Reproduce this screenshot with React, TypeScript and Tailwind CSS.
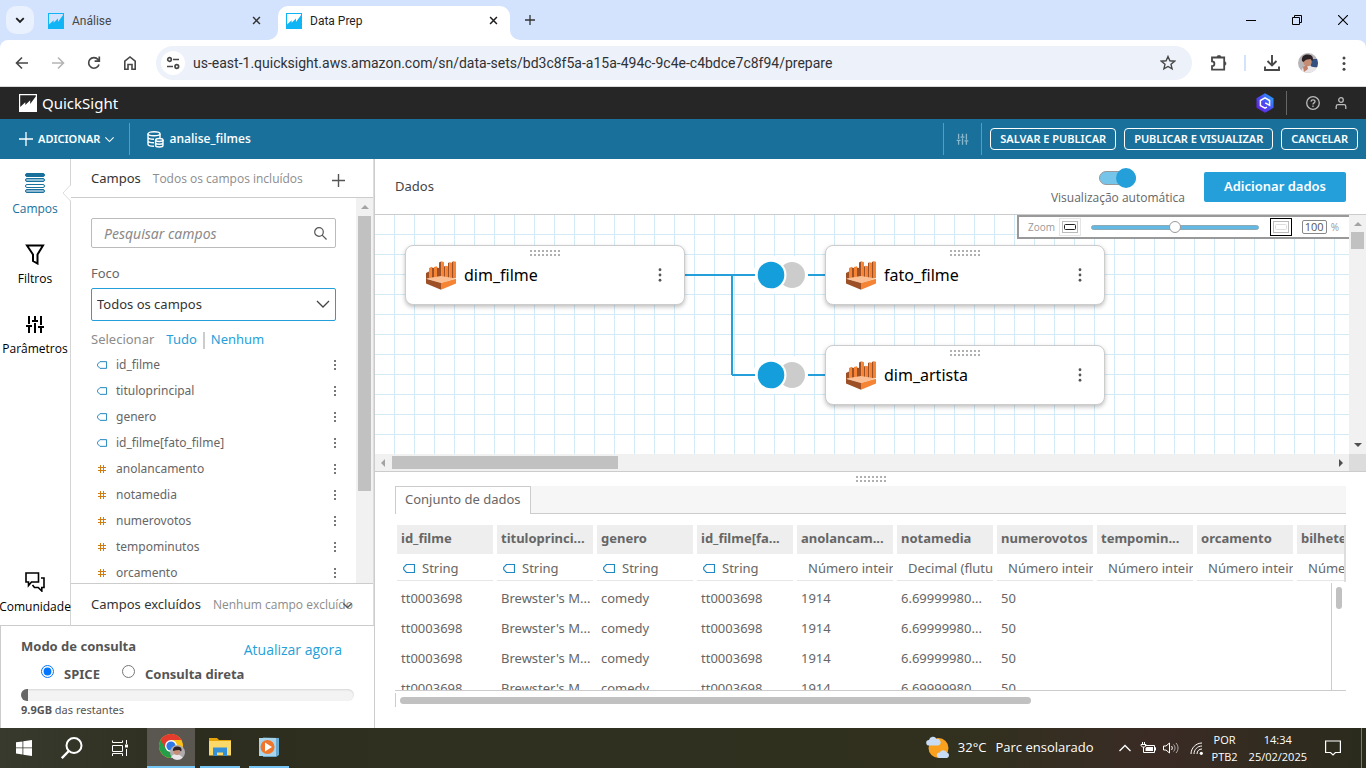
import React from 'react';

const SANS = "font-['Open_Sans','Noto_Sans',sans-serif]";
const NOTO = "font-['Noto_Sans','Open_Sans',sans-serif]";

/* ---------- Icons ---------- */

function QuickSightMark({ className, hole }: { className: string; hole: string }) {
  return (
    <svg viewBox="0 0 18 18" className={className} aria-hidden="true">
      <rect width="18" height="18" fill="currentColor" />
      <path d="M1.200 1.200h15.600v1.300L11.200 10V6.300L6.300 11V8.200L1.200 13z" fill={hole} />
    </svg>
  );
}

function ChevronDown({ className, width = 1.5 }: { className: string; width?: number }) {
  return (
    <svg viewBox="0 0 16 16" className={className} fill="none" stroke="currentColor" strokeWidth={width} aria-hidden="true">
      <path d="M2 5l6 6 6-6" />
    </svg>
  );
}

function CloseIcon({ className }: { className: string }) {
  return (
    <svg viewBox="0 0 10 10" className={className} stroke="currentColor" strokeWidth="1.7" aria-hidden="true">
      <path d="M1.2 1.2l7.6 7.6M8.8 1.2L1.2 8.8" />
    </svg>
  );
}

function PlusIcon({ className, width = 1.5 }: { className: string; width?: number }) {
  return (
    <svg viewBox="0 0 14 14" className={className} stroke="currentColor" strokeWidth={width} aria-hidden="true">
      <path d="M7 0v14M0 7h14" />
    </svg>
  );
}

function SlidersIcon({ className }: { className: string }) {
  return (
    <svg viewBox="0 0 20 18" className={className} stroke="currentColor" strokeWidth="2" fill="none" aria-hidden="true">
      <path d="M4 1v8M4 12v6M1 11h6M10 1v4M10 8v10M7 6h6M16 1v9M16 13v5M13 12h6" />
    </svg>
  );
}

function VerticalDots({ className }: { className: string }) {
  return (
    <svg viewBox="0 0 4 16" className={className} fill="currentColor" aria-hidden="true">
      <circle cx="2" cy="2" r="1.6" />
      <circle cx="2" cy="8" r="1.6" />
      <circle cx="2" cy="14" r="1.6" />
    </svg>
  );
}

function RowDots() {
  return (
    <svg viewBox="0 0 2 10" className="h-[10px] w-[2px] text-[#777]" fill="currentColor" aria-hidden="true">
      <path d="M0 0h2v2H0zM0 4h2v2H0zM0 8h2v2H0z" />
    </svg>
  );
}

function Grip() {
  const columns = Array.from({ length: 8 }, (_, i) => i * 4);
  return (
    <svg viewBox="0 0 30 6" className="h-[6px] w-[30px]" fill="#b0b0b0" aria-hidden="true">
      {columns.map((x) => (
        <path key={x} d={`M${x} 0h2v2h-2zM${x} 4h2v2h-2z`} />
      ))}
    </svg>
  );
}

function StringIcon({ className }: { className: string }) {
  return (
    <svg viewBox="0 0 12 9" className={className} fill="none" stroke="#2088c0" strokeWidth="1.2" aria-hidden="true">
      <path d="M3.5.5h8v8h-8L.7 5.6V3.4z" />
    </svg>
  );
}

function HashIcon() {
  return (
    <svg viewBox="0 0 8 8" className="h-[8px] w-[8px]" stroke="#d07c10" strokeWidth="1" aria-hidden="true">
      <path d="M2.5 0v8M5.5 0v8M0 2.5h8M0 5.5h8" />
    </svg>
  );
}

function AthenaIcon() {
  return (
    <svg viewBox="0 0 30 29" className="h-[29px] w-[30px]" aria-hidden="true">
      <path d="M0 12l3-1.500V18H0z" fill="#9d5025" />
      <path d="M3 7l3-1.300V18H3z" fill="#f58534" />
      <path d="M6 6.500l2 .5v11H6z" fill="#9d5025" />
      <path d="M8 6l3-.8V18H8z" fill="#f58534" />
      <path d="M11 6.500l2 .5v11h-2z" fill="#9d5025" />
      <path d="M13 1.500l2.500-1.200V18H13z" fill="#9d5025" />
      <path d="M15.500 .3l2.500.9V18h-2.500z" fill="#f58534" />
      <path d="M18 5.500l1.500-.8V18H18z" fill="#9d5025" />
      <path d="M19.500 4.700l2.500.6V18h-2.500z" fill="#f58534" />
      <path d="M22 2l1.500-.7V17H22z" fill="#9d5025" />
      <path d="M23.500 1.300l2.500.5V17h-2.500zM27.500 .2l2.500.5V17h-2.500z" fill="#f58534" />
      <path d="M26 1l1.500-.8V17H26z" fill="#9d5025" />
      <path d="M0 17.600L15 15l15 2.600-15 4.500z" fill="#fbbf93" />
      <path d="M0 17.800l15 4.300v6.700L0 22.500z" fill="#9d5025" />
      <path d="M30 17.800l-15 4.300v6.700l15-6.300z" fill="#f58534" />
    </svg>
  );
}

function Avatar({ className }: { className: string }) {
  return (
    <svg viewBox="0 0 20 20" className={className} aria-hidden="true">
      <clipPath id="avatarClip">
        <circle cx="10" cy="10" r="10" />
      </clipPath>
      <g clipPath="url(#avatarClip)">
        <rect width="20" height="20" fill="#b9b4b6" />
        <path d="M12 6h8v8h-7z" fill="#34507f" />
        <path d="M3 20c0-5 4-8 9-7l6 2v6z" fill="#e9e6ea" />
        <circle cx="9.500" cy="9" r="4.200" fill="#c58d74" />
        <path d="M4 8c-1-5 3-7 6-6.500 4 0 6 3 4.500 6.500L12.500 6 8 6.800 5.500 9z" fill="#2b2226" />
        <path d="M5 14l4-2 1 4-4 3z" fill="#c07f66" />
      </g>
    </svg>
  );
}

/* ---------- Browser chrome ---------- */

function BrowserTabs() {
  return (
    <div className="flex h-10 shrink-0 items-end bg-[#d3e2fd] pl-[6px]">
      <button aria-label="Pesquisar guias" className="mb-[6px] flex h-7 w-7 items-center justify-center rounded-[10px] bg-[#e9f0fe] text-[#1f1f1f]">
        <ChevronDown className="h-[10px] w-[10px]" width={3} />
      </button>
      <div className="flex h-[34px] w-[244px] items-center pr-[17px] pb-[5px] pl-[14px]">
        <QuickSightMark className="h-4 w-4 text-[#0fb5f5]" hole="#d3e2fd" />
        <span className="ml-2 flex-1 font-[Roboto,sans-serif] text-[12px] text-[#474747]">Análise</span>
        <button aria-label="Fechar guia" className="text-[#333]">
          <CloseIcon className="h-[9px] w-[9px]" />
        </button>
      </div>
      <div className="relative flex h-[34px] w-[232px] items-center rounded-t-[10px] bg-white pr-[12px] pb-[5px] pl-[8px]">
        <svg viewBox="0 0 10 10" className="absolute bottom-0 -left-[10px] h-[10px] w-[10px]" aria-hidden="true">
          <path d="M10 0v10H0A10 10 0 0 0 10 0z" fill="#fff" />
        </svg>
        <svg viewBox="0 0 10 10" className="absolute -right-[10px] bottom-0 h-[10px] w-[10px]" aria-hidden="true">
          <path d="M0 0v10h10A10 10 0 0 1 0 0z" fill="#fff" />
        </svg>
        <QuickSightMark className="h-4 w-4 text-[#0fb5f5]" hole="#fff" />
        <span className="ml-2 flex-1 font-[Roboto,sans-serif] text-[12px] text-[#1f1f1f]">Data Prep</span>
        <button aria-label="Fechar guia" className="text-[#1f1f1f]">
          <CloseIcon className="h-[9px] w-[9px]" />
        </button>
      </div>
      <button aria-label="Nova guia" className="mb-[6px] ml-[10px] flex h-7 w-5 items-center justify-center text-[#333]">
        <PlusIcon className="h-[10px] w-[10px]" width={1.800} />
      </button>
      <div className="ml-auto flex h-full items-center text-black">
        <button aria-label="Minimizar" className="flex h-full w-[46px] items-center justify-center">
          <svg viewBox="0 0 10 10" className="h-[10px] w-[10px]" stroke="currentColor" aria-hidden="true">
            <path d="M0 5.500h10" />
          </svg>
        </button>
        <button aria-label="Restaurar" className="flex h-full w-[46px] items-center justify-center">
          <svg viewBox="0 0 10 10" className="h-[10px] w-[10px]" fill="none" stroke="currentColor" aria-hidden="true">
            <path d="M.5 2.500h7v7h-7zM2.500 2.500v-2h7v7h-2" />
          </svg>
        </button>
        <button aria-label="Fechar" className="flex h-full w-[46px] items-center justify-center">
          <svg viewBox="0 0 10 10" className="h-[10px] w-[10px]" stroke="currentColor" strokeWidth="1.100" aria-hidden="true">
            <path d="M0 0l10 10M10 0L0 10" />
          </svg>
        </button>
      </div>
    </div>
  );
}

function BrowserToolbar() {
  return (
    <div className="shrink-0 bg-[#d3e2fd]">
      <div className="flex h-[47px] items-center rounded-t-[8px] border-b border-[#d9dadc] bg-white pr-[10px] pl-[14px] text-[#474747]">
        <button aria-label="Voltar" className="flex w-4 justify-center">
          <svg viewBox="0 0 16 16" className="h-4 w-4" fill="none" stroke="currentColor" strokeWidth="1.600" aria-hidden="true">
            <path d="M14 8H3M8 2.500L2.500 8 8 13.500" />
          </svg>
        </button>
        <button aria-label="Avançar" className="ml-5 flex w-4 justify-center text-[#b5b5b5]">
          <svg viewBox="0 0 16 16" className="h-4 w-4" fill="none" stroke="currentColor" strokeWidth="1.600" aria-hidden="true">
            <path d="M2 8h11M8 2.500L13.500 8 8 13.500" />
          </svg>
        </button>
        <button aria-label="Recarregar" className="ml-5 flex w-4 justify-center">
          <svg viewBox="0 0 16 16" className="h-4 w-4" fill="none" stroke="currentColor" strokeWidth="1.700" aria-hidden="true">
            <path d="M13 9.500A5.300 5.300 0 1 1 12 4.500l1 1.200M13.300 1.500v4.700H8.600" />
          </svg>
        </button>
        <button aria-label="Página inicial" className="ml-5 flex w-4 justify-center">
          <svg viewBox="0 0 16 16" className="h-4 w-4" fill="none" stroke="currentColor" strokeWidth="1.600" aria-hidden="true">
            <path d="M2.800 6.200L8 2l5.200 4.200v8H10V9.500H6v4.700H2.800z" />
          </svg>
        </button>
        <div className="ml-[18px] flex h-[34px] flex-1 items-center rounded-full bg-[#edf1fa] pr-4 pl-[5px]">
          <button aria-label="Informações do site" className="flex h-6 w-6 shrink-0 items-center justify-center rounded-full bg-white">
            <svg viewBox="0 0 14 14" className="h-[14px] w-[14px]" fill="none" stroke="currentColor" strokeWidth="1.700" aria-hidden="true">
              <circle cx="3.500" cy="3.500" r="1.800" />
              <path d="M7 3.500h6M1 10.500h6" />
              <circle cx="10.800" cy="10.500" r="1.800" />
            </svg>
          </button>
          <input
            aria-label="Endereço"
            readOnly
            value="us-east-1.quicksight.aws.amazon.com/sn/data-sets/bd3c8f5a-a15a-494c-9c4e-c4bdce7c8f94/prepare"
            className="ml-2 min-w-0 flex-1 bg-transparent font-[Roboto,sans-serif] text-[14px] text-[#2f3135] outline-none"
          />
          <svg viewBox="0 0 16 16" className="h-4 w-4 shrink-0" fill="none" stroke="currentColor" strokeWidth="1.400" aria-hidden="true">
            <path d="M8 1.500l1.900 4.300 4.700.4-3.600 3.100 1.100 4.600L8 11.500l-4.100 2.400L5 9.300 1.400 6.200l4.700-.4z" />
          </svg>
        </div>
        <button aria-label="Extensões" className="ml-[17px]">
          <svg viewBox="0 0 18 18" className="h-[18px] w-[18px]" fill="none" stroke="currentColor" strokeWidth="1.800" aria-hidden="true">
            <path d="M3 3.500h12.200v12.200H3v-3.500a2.400 2.400 0 0 0 0-4.800z" />
            <path d="M8 3a2 1.700 0 0 1 4 0zM15.500 7.500a1.500 2 0 0 1 0 4z" fill="currentColor" strokeWidth=".5" />
          </svg>
        </button>
        <span className="ml-[17px] h-4 w-[2px] bg-[#d3e2fd]" />
        <button aria-label="Downloads" className="ml-[17px]">
          <svg viewBox="0 0 18 18" className="h-[18px] w-[18px]" fill="none" stroke="currentColor" strokeWidth="1.900" aria-hidden="true">
            <path d="M9 1v10M4.500 7L9 11.500 13.500 7M2 12.500V16h14v-3.500" />
          </svg>
        </button>
        <button aria-label="Perfil" className="ml-[17px]">
          <Avatar className="h-5 w-5" />
        </button>
        <button aria-label="Mais opções" className="mr-[10px] ml-6">
          <VerticalDots className="h-[15px] w-1" />
        </button>
      </div>
    </div>
  );
}

/* ---------- Application bars ---------- */

function ProductBar() {
  return (
    <header className="flex h-8 shrink-0 items-center bg-[#262626] pr-[19px] pl-[19px] text-white">
      <QuickSightMark className="h-[18px] w-[18px]" hole="#262626" />
      <span className={`ml-[5px] text-[15px] leading-5 ${NOTO}`}>QuickSight</span>
      <button aria-label="Amazon Q" className="ml-auto">
        <svg viewBox="0 0 18 20" className="h-5 w-[18px]" aria-hidden="true">
          <defs>
            <linearGradient id="qFill" x1="1" y1="0" x2="0" y2="1">
              <stop offset="0" stopColor="#1fb4ff" />
              <stop offset=".5" stopColor="#4a4df5" />
              <stop offset="1" stopColor="#6a18d8" />
            </linearGradient>
          </defs>
          <path d="M9 .3l8.500 4.900v9.600L9 19.700.5 14.800V5.200z" fill="url(#qFill)" />
          <path d="M11 14.200l-2 1-4.600-2.600V7.500L9 4.900l4.600 2.600v4.800L9.200 9.800" fill="none" stroke="#fff" strokeWidth="1.500" />
        </svg>
      </button>
      <span className="ml-3 h-6 w-px bg-[#666]" />
      <button aria-label="Ajuda" className="ml-[19px] text-[#bbb]">
        <svg viewBox="0 0 14 14" className="h-[14px] w-[14px]" fill="none" stroke="currentColor" strokeWidth="1.300" aria-hidden="true">
          <circle cx="7" cy="7" r="6.300" />
          <path d="M5 5.600c.2-2.500 4.100-2.200 4 0 0 1.300-2 1.300-2 2.900M7 9.600V11" />
        </svg>
      </button>
      <button aria-label="Usuário" className="ml-[15px] text-[#bbb]">
        <svg viewBox="0 0 12 12" className="h-3 w-3" fill="none" stroke="currentColor" strokeWidth="1.300" aria-hidden="true">
          <circle cx="6" cy="3" r="2.300" />
          <path d="M1.200 12V9.500C1.200 8.300 2 7.700 3 7.700h6c1 0 1.800.6 1.800 1.800V12" />
        </svg>
      </button>
    </header>
  );
}

function ActionBar() {
  const outline = `h-[22px] rounded-[4px] border border-white px-[9px] text-[11px] leading-[18px] font-semibold text-white whitespace-nowrap ${NOTO}`;
  return (
    <div className="flex h-10 shrink-0 items-center bg-[#19719b] pr-2 pl-[19px] text-white">
      <button className={`flex items-center text-[11px] font-semibold ${NOTO}`}>
        <PlusIcon className="mr-[5px] h-[14px] w-[14px]" width={1.300} />
        ADICIONAR
        <ChevronDown className="ml-[4px] h-[11px] w-[11px]" width={1.600} />
      </button>
      <span className="ml-[14px] h-8 w-px bg-[#5b9cbb]" />
      <svg viewBox="0 0 17 17" className="ml-[17px] h-[17px] w-[17px]" fill="none" stroke="currentColor" strokeWidth="1.400" aria-hidden="true">
        <ellipse cx="7" cy="2.800" rx="6" ry="2" />
        <path d="M1 2.800v10.500c0 1 2.700 1.900 6 1.900M13 2.800V7M1 6.300c0 1.100 2.700 1.900 6 1.900M1 9.800c0 1.100 2.700 1.900 6 1.900" />
        <ellipse cx="12.300" cy="9" rx="3.700" ry="1.500" />
        <path d="M8.600 9v5.500c0 .9 1.600 1.500 3.700 1.500s3.700-.6 3.700-1.500V9M8.600 11.800c0 .9 1.600 1.500 3.700 1.500s3.700-.6 3.700-1.500" />
      </svg>
      <span className="ml-[5px] text-[12px] font-semibold">analise_filmes</span>
      <div className="ml-auto flex items-center">
        <span className="h-8 w-px bg-[#5b9cbb]" />
        <button aria-label="Parâmetros" className="mx-3 text-[#8bb8cd]">
          <SlidersIcon className="h-3 w-[13px]" />
        </button>
        <span className="h-8 w-px bg-[#5b9cbb]" />
        <div className="ml-2 flex gap-2">
          <button className={outline}>SALVAR E PUBLICAR</button>
          <button className={outline}>PUBLICAR E VISUALIZAR</button>
          <button className={outline}>CANCELAR</button>
        </div>
      </div>
    </div>
  );
}

/* ---------- Left side ---------- */

function NavRail() {
  const item = 'flex w-full flex-col items-center text-[12px] leading-4';
  return (
    <nav className="relative flex w-[71px] shrink-0 flex-col items-center border-r border-[#d5d5d5] pt-[14px] pb-[11px] text-black">
      <a href="#campos" className={`${item} text-[#19719b]`}>
        <svg viewBox="0 0 20 21" className="mb-[7px] h-[21px] w-5" fill="none" stroke="#19719b" aria-hidden="true">
          <rect x=".5" y=".5" width="19" height="3" rx="1.500" fill="#19719b" />
          <rect x=".5" y="5.500" width="19" height="3" rx="1.500" fill="#8fc2d8" />
          <rect x=".5" y="11.500" width="19" height="3" rx="1.500" />
          <rect x=".5" y="16.500" width="19" height="3" rx="1.500" fill="#8fb8d2" />
        </svg>
        Campos
      </a>
      <a href="#filtros" className={`${item} mt-[27px]`}>
        <svg viewBox="0 0 20 21" className="mb-[6px] h-[21px] w-5" fill="none" stroke="currentColor" strokeWidth="2" aria-hidden="true">
          <path d="M2 1.500h16l-5.500 9v9L8 17v-6.500z" />
        </svg>
        Filtros
      </a>
      <a href="#parametros" className={`${item} mt-[28px]`}>
        <SlidersIcon className="mb-[8px] h-[18px] w-5" />
        Parâmetros
      </a>
      <a href="#comunidade" className={`${item} mt-auto`}>
        <svg viewBox="0 0 20 20" className="mb-[7px] h-5 w-5" fill="none" stroke="currentColor" strokeWidth="1.600" aria-hidden="true">
          <path d="M1 1h12.500v9H6.500L3.500 13.500V10H1z" />
          <path d="M16 6h3v9.500h-2.200V19l-3.600-3.500H9.500L7.500 13" />
        </svg>
        Comunidade
      </a>
      <svg viewBox="0 0 9 16" className="absolute top-[26px] -right-px h-4 w-[9px]" aria-hidden="true">
        <path d="M9 0L1 8l8 8z" fill="#fff" />
        <path d="M8.500 0L1 8l7.500 8" fill="none" stroke="#ddd" />
      </svg>
    </nav>
  );
}

const FIELDS: { name: string; kind: 'string' | 'number' }[] = [
  { name: 'id_filme', kind: 'string' },
  { name: 'tituloprincipal', kind: 'string' },
  { name: 'genero', kind: 'string' },
  { name: 'id_filme[fato_filme]', kind: 'string' },
  { name: 'anolancamento', kind: 'number' },
  { name: 'notamedia', kind: 'number' },
  { name: 'numerovotos', kind: 'number' },
  { name: 'tempominutos', kind: 'number' },
  { name: 'orcamento', kind: 'number' },
];

function FieldsPanel() {
  return (
    <section className={`flex min-h-0 min-w-0 flex-1 flex-col border-r border-[#ddd] ${NOTO}`}>
      <div className="flex h-[39px] shrink-0 items-center border-b border-[#ccc] pt-px pr-7 pl-5">
        <h2 className="text-[13px] text-[#333]">Campos</h2>
        <span className={`ml-3 pt-px text-[12px] text-[#8c8c8c] ${SANS}`}>Todos os campos incluídos</span>
        <button aria-label="Adicionar campo" className="ml-auto pt-1 text-[#555]">
          <PlusIcon className="h-[13px] w-[13px]" width={1.500} />
        </button>
      </div>
      <div className="flex min-h-0 flex-1">
        <div className="min-w-0 flex-1 overflow-hidden px-5 pt-5">
          <div className="relative">
            <input
              type="text"
              aria-label="Pesquisar campos"
              placeholder="Pesquisar campos"
              className="h-[30px] w-full rounded-[2px] border border-[#bbb] pr-9 pl-3 text-[14px] text-[#444] placeholder:text-[#8a8a8a] placeholder:italic"
            />
            <svg viewBox="0 0 13 13" className="absolute top-[9px] right-[9px] h-[13px] w-[13px]" fill="none" stroke="#555" strokeWidth="1.200" aria-hidden="true">
              <circle cx="5" cy="5" r="4.300" />
              <path d="M8.200 8.200L12.500 12.500" />
            </svg>
          </div>
          <label htmlFor="foco" className="mt-[15px] block text-[13px] leading-5 text-[#666]">Foco</label>
          <div className="relative mt-[5px]">
            <select id="foco" className="h-[33px] w-full appearance-none rounded-[2px] border border-[#259fda] bg-white px-[5px] text-[13px] text-[#333]">
              <option>Todos os campos</option>
            </select>
            <ChevronDown className="pointer-events-none absolute top-[8px] right-[5px] h-4 w-4 text-[#444]" width={1.300} />
          </div>
          <div className="mt-[10px] flex h-[18px] items-center text-[13px] text-[#259fda]">
            <span className="mr-3 text-[#8c8c8c]">Selecionar</span>
            <button>Tudo</button>
            <span className="mx-[6px] h-[17px] w-[2px] bg-[#ccc]" />
            <button>Nenhum</button>
          </div>
          <ul className="mt-[3px]">
            {FIELDS.map((field) => (
              <li key={field.name} className="flex h-[26px] items-center pl-[6px]">
                <span className="flex w-[19px] items-center">
                  {field.kind === 'string' ? <StringIcon className="h-[8px] w-[10px]" /> : <span className="pl-px"><HashIcon /></span>}
                </span>
                <span className="flex-1 text-[12px] text-[#666]">{field.name}</span>
                <button aria-label={`Opções de ${field.name}`} className="w-[2px]">
                  <RowDots />
                </button>
              </li>
            ))}
          </ul>
        </div>
        <div className="flex w-[17px] shrink-0 flex-col items-center bg-[#f1f1f1]">
          <svg viewBox="0 0 8 4" className="my-[7px] h-1 w-2 shrink-0" fill="#a3a3a3" aria-hidden="true">
            <path d="M4 0l4 4H0z" />
          </svg>
          <div className="h-[275px] w-[13px] shrink-0 bg-[#c1c1c1]" />
        </div>
      </div>
      <div className="relative flex h-[43px] shrink-0 items-center border-y border-[#ccc] pt-px pl-5 whitespace-nowrap">
        <h2 className="text-[13px] text-[#333]">Campos excluídos</h2>
        <span className={`ml-3 text-[12px] text-[#8c8c8c] ${SANS}`}>Nenhum campo excluído</span>
        <button aria-label="Expandir campos excluídos" className="absolute top-4 right-[20px] text-[#555]">
          <ChevronDown className="h-[11px] w-[11px]" width={1.800} />
        </button>
      </div>
    </section>
  );
}

function QueryMode() {
  return (
    <section className={`-mt-px flex h-[103px] shrink-0 flex-col border-t border-l border-[#ccc] px-5 pt-[10px] text-[#555] ${NOTO}`}>
      <div className="flex justify-between pr-3 leading-5">
        <h3 className="text-[13px] font-bold">Modo de consulta</h3>
        <a href="#atualizar" className={`pt-1 text-[14px] text-[#259fda] ${SANS}`}>Atualizar agora</a>
      </div>
      <div className="flex h-6 items-end pl-5 text-[13px] leading-5 font-bold">
        <input id="spice" type="radio" name="modo" defaultChecked className="mb-[6px] h-[13px] w-[13px]" />
        <label htmlFor="spice" className="ml-[10px]">SPICE</label>
        <input id="direta" type="radio" name="modo" className="mb-[6px] ml-[22px] h-[13px] w-[13px]" />
        <label htmlFor="direta" className="ml-[10px]">Consulta direta</label>
      </div>
      <div className="mt-[5px] h-3 w-full overflow-hidden rounded-full bg-[#f3f3f3] shadow-[inset_0_1px_2px_rgba(0,0,0,0.12)]">
        <div className="h-full w-[7px] bg-[#666]" />
      </div>
      <p className={`mt-px text-[11px] leading-4 ${NOTO}`}>
        <b>9.9GB</b> das restantes
      </p>
    </section>
  );
}

/* ---------- Diagram canvas ---------- */

function DataNode({ name, className }: { name: string; className: string }) {
  return (
    <div className={`absolute flex h-[60px] w-[280px] items-center rounded-[8px] border border-[#ccc] bg-white pr-[22px] pl-5 shadow-[0_2px_4px_rgba(0,0,0,0.25)] ${className}`}>
      <span className="absolute top-1 left-[124px]">
        <Grip />
      </span>
      <AthenaIcon />
      <span className={`ml-2 flex-1 text-[16px] text-black ${NOTO}`}>{name}</span>
      <button aria-label={`Opções de ${name}`} className="text-[#555]">
        <VerticalDots className="h-[14px] w-[4px]" />
      </button>
    </div>
  );
}

function Join({ y }: { y: number }) {
  return (
    <g>
      <circle cx="397" cy={y} r="19" fill="#fff" />
      <circle cx="416" cy={y} r="19" fill="#fff" />
      <circle cx="417" cy={y} r="13" fill="#ccc" />
      <circle cx="396" cy={y} r="15.500" fill="#fff" />
      <circle cx="396" cy={y} r="13.300" fill="#149edb" />
      <path d={`M433 ${y}h17`} stroke="#259fda" strokeWidth="2" />
      <path d={`M357 ${y}h23`} stroke="#259fda" strokeWidth="2" />
    </g>
  );
}

function FitGlyph({ active }: { active?: boolean }) {
  return (
    <svg viewBox="0 0 22 18" className="h-[18px] w-[22px]" fill="none" aria-hidden="true">
      <rect x=".5" y=".5" width="21" height="17" stroke={active ? '#000' : '#e5e5e5'} />
      <rect x="3.500" y="3.500" width="15" height="11" stroke="#bbb" />
      <rect x="5.500" y="6.500" width="11" height="5" rx="1" stroke={active ? '#ddd' : '#222'} />
    </svg>
  );
}

function Canvas() {
  return (
    <div className="shrink-0 border-y border-[#ccc]">
      <div className="flex h-[239px]">
        <div className="relative min-w-0 flex-1 overflow-hidden bg-[linear-gradient(to_right,transparent_19px,#d2ebf7_19px),linear-gradient(to_bottom,transparent_19px,#d2ebf7_19px)] bg-[size:20px_20px]">
          <svg className="absolute inset-0 h-full w-full" aria-hidden="true">
            <path d="M310 60h47V160" fill="none" stroke="#259fda" strokeWidth="2" />
            <Join y={60} />
            <Join y={160} />
          </svg>
          <DataNode name="dim_filme" className="top-[30px] left-[30px]" />
          <DataNode name="fato_filme" className="top-[30px] left-[450px]" />
          <DataNode name="dim_artista" className="top-[130px] left-[450px]" />
          <div className="absolute top-0 right-0 flex h-6 w-[332px] items-center border-2 border-r-0 border-[#999] bg-white pr-[10px] pl-[9px] text-[10px] text-[#999]">
            <label htmlFor="zoom">Zoom</label>
            <span className="ml-[4px]"><FitGlyph /></span>
            <input
              id="zoom"
              type="range"
              min="0"
              max="100"
              defaultValue="50"
              className="mr-[11px] ml-[10px] h-[5px] min-w-0 flex-1 appearance-none rounded-full border border-[#8fa9b5] bg-[#62b9e3] [&::-webkit-slider-thumb]:h-3 [&::-webkit-slider-thumb]:w-3 [&::-webkit-slider-thumb]:appearance-none [&::-webkit-slider-thumb]:rounded-full [&::-webkit-slider-thumb]:border [&::-webkit-slider-thumb]:border-[#999] [&::-webkit-slider-thumb]:bg-white"
            />
            <FitGlyph active />
            <input
              aria-label="Nível de zoom"
              type="text"
              defaultValue="100"
              className="mr-[4px] ml-[10px] h-[14px] w-[25px] rounded-[2px] border border-[#888] bg-white text-center text-[11px] text-[#555]"
            />
            %
          </div>
        </div>
        <div className="flex w-[17px] shrink-0 flex-col items-center bg-[#f1f1f1] py-[7px]">
          <svg viewBox="0 0 8 4" className="h-1 w-2 shrink-0" fill="#a3a3a3" aria-hidden="true">
            <path d="M4 0l4 4H0z" />
          </svg>
          <div className="mt-[6px] h-[17px] w-[13px] bg-[#c1c1c1]" />
          <svg viewBox="0 0 8 4" className="mt-auto h-1 w-2 shrink-0" fill="#505050" aria-hidden="true">
            <path d="M0 0h8L4 4z" />
          </svg>
        </div>
      </div>
      <div className="flex h-[17px] items-center bg-[#f1f1f1]">
        <svg viewBox="0 0 4 8" className="mx-[6px] h-2 w-1" fill="#a3a3a3" aria-hidden="true">
          <path d="M4 0v8L0 4z" />
        </svg>
        <div className="ml-px h-[13px] w-[226px] bg-[#c1c1c1]" />
        <svg viewBox="0 0 4 8" className="mr-[6px] ml-auto h-2 w-1" fill="#505050" aria-hidden="true">
          <path d="M0 0v8l4-4z" />
        </svg>
        <div className="h-full w-[17px] bg-[#dcdcdc]" />
      </div>
    </div>
  );
}

/* ---------- Data preview ---------- */

const COLUMNS: { name: string; type: string; value: string }[] = [
  { name: 'id_filme', type: 'String', value: 'tt0003698' },
  { name: 'tituloprinci...', type: 'String', value: "Brewster's M..." },
  { name: 'genero', type: 'String', value: 'comedy' },
  { name: 'id_filme[fa...', type: 'String', value: 'tt0003698' },
  { name: 'anolancam...', type: 'Número inteiro', value: '1914' },
  { name: 'notamedia', type: 'Decimal (flutuante)', value: '6.69999980...' },
  { name: 'numerovotos', type: 'Número inteiro', value: '50' },
  { name: 'tempomin...', type: 'Número inteiro', value: '' },
  { name: 'orcamento', type: 'Número inteiro', value: '' },
  { name: 'bilheteria', type: 'Número inteiro', value: '' },
];

function Preview() {
  return (
    <section className="flex min-h-0 flex-1 flex-col px-5">
      <div className="flex shrink-0 justify-center pt-1 pb-1">
        <Grip />
      </div>
      <div className="flex h-7 shrink-0 border-b border-[#ccc] bg-[#f6f6f6]">
        <button className={`-mb-px border border-b-0 border-[#ccc] bg-white px-[9px] pb-px text-[13px] text-[#666] ${NOTO}`}>Conjunto de dados</button>
      </div>
      <div className="relative mt-[11px] min-h-0 flex-1 overflow-hidden border-b border-[#ccc]">
        <table className={`-ml-[2px] w-[1004px] table-fixed border-separate border-spacing-x-[4px] border-spacing-y-0 text-left text-[13px] text-[#666] ${NOTO}`}>
          <thead>
            <tr>
              {COLUMNS.map((c) => (
                <th key={c.name} scope="col" className="h-[29px] overflow-hidden bg-[#eee] px-1 pb-[2px] font-bold whitespace-nowrap">{c.name}</th>
              ))}
            </tr>
            <tr>
              {COLUMNS.map((c) => (
                <td key={c.name} className="h-[27px] overflow-hidden border-b border-[#e6e6e6] pt-[3px] whitespace-nowrap">
                  {c.type === 'String' ? (
                    <span className="flex items-center pl-[6px]">
                      <StringIcon className="mr-[7px] h-[9px] w-3" />
                      {c.type}
                    </span>
                  ) : (
                    <span className="pl-[11px]">{c.type}</span>
                  )}
                </td>
              ))}
            </tr>
          </thead>
          <tbody>
            {[0, 1, 2, 3].map((row) => (
              <tr key={row}>
                {COLUMNS.map((c) => (
                  <td key={c.name} className={row === 0 ? 'h-[33px] pt-[3px] pl-1 whitespace-nowrap' : 'h-[30px] pl-1 whitespace-nowrap'}>{c.value}</td>
                ))}
              </tr>
            ))}
          </tbody>
        </table>
        <div className="absolute top-0 right-0 h-[57px] w-[2px] bg-[#ddd]" />
        <div className="absolute top-[58px] right-0 bottom-0 flex w-[15px] justify-center border-l border-[#ccc] bg-white pt-1">
          <div className="h-[22px] w-[6px] rounded-full bg-[#c1c1c1]" />
        </div>
      </div>
      <div className="mt-[2px] mb-[21px] flex h-[14px] shrink-0 items-center border-l border-[#ccc] pl-1">
        <div className="h-[7px] w-2/3 rounded-full bg-[#c1c1c1]" />
      </div>
    </section>
  );
}

function Workspace() {
  return (
    <main className="flex min-h-0 min-w-0 flex-1 flex-col">
      <div className="flex h-[55px] shrink-0 items-center px-5 pt-px">
        <h1 className={`text-[13px] text-[#444] ${NOTO}`}>Dados</h1>
        <label className="ml-auto flex flex-col items-center text-[12px] leading-4 text-[#666]">
          <input type="checkbox" role="switch" defaultChecked className="sr-only" />
          <span className="mb-[2px] flex h-5 w-[37px] items-center">
            <span className="flex h-[14px] w-full items-center justify-end rounded-full border border-[#999] bg-[#75c5ea]">
              <span className="-mr-px h-5 w-5 shrink-0 rounded-full bg-[#259fda]" />
            </span>
          </span>
          Visualização automática
        </label>
        <button className={`ml-[19px] h-[30px] rounded-[2px] bg-[#259fda] px-5 text-[13px] font-semibold text-white ${NOTO}`}>Adicionar dados</button>
      </div>
      <Canvas />
      <Preview />
    </main>
  );
}

/* ---------- Taskbar ---------- */

function Taskbar() {
  return (
    <footer className="flex h-10 shrink-0 items-stretch bg-[linear-gradient(to_right,#383a2d,#2c2d1e_15%,#2f301f_30%,#30301f_60%,#32301f_72%,#3a2b25_85%,#332b20_92%,#2a2b1d)] text-white">
      <button aria-label="Iniciar" className="flex w-12 items-center justify-center">
        <svg viewBox="0 0 16 16" className="h-4 w-4" fill="currentColor" aria-hidden="true">
          <path d="M0 2.300l6.500-.9v6.100H0zM7.300 1.300L16 0v7.500H7.300zM0 8.300h6.500v6.200L0 13.600zM7.300 8.300H16V16l-8.700-1.300z" />
        </svg>
      </button>
      <button aria-label="Pesquisar" className="flex w-12 items-center justify-center">
        <svg viewBox="0 0 22 22" className="h-[22px] w-[22px]" fill="none" stroke="currentColor" strokeWidth="2" aria-hidden="true">
          <circle cx="13" cy="8.500" r="7.500" />
          <path d="M7.800 14L.8 21.200" strokeWidth="2.400" />
        </svg>
      </button>
      <button aria-label="Visão de tarefas" className="flex w-12 items-center justify-center">
        <svg viewBox="0 0 16 16" className="h-4 w-4" fill="none" stroke="currentColor" aria-hidden="true">
          <path d="M.5.5v2h10v-2M.5 5.500h10v6H.5zM.5 16v-2.500h10V16M14.500 0v4M14.500 9v7" />
          <path d="M13 4.500h3v3h-3z" fill="currentColor" stroke="none" />
        </svg>
      </button>
      <button aria-label="Google Chrome" className="ml-[3px] flex w-12 items-center justify-center border-b-2 border-[#76c6f5] bg-[#59574f]">
        <svg viewBox="0 0 26 26" className="ml-[2px] h-[26px] w-[26px]" aria-hidden="true">
          <circle cx="12" cy="12" r="12" fill="#fbc116" />
          <path d="M12 12L1.600 6a12 12 0 0 0 10 18l5-9z" fill="#249e48" />
          <path d="M1.600 6A12 12 0 0 1 22.400 6H12L6.800 15z" fill="#e33b2e" />
          <circle cx="12" cy="12" r="6" fill="#fff" />
          <circle cx="12" cy="12" r="4.600" fill="#2f78e8" />
          <g transform="translate(11 11)">
            <circle cx="7.500" cy="7.500" r="7.500" fill="#b0abad" />
            <path d="M1.500 12c1-4 8-4 11 .8a7.500 7.500 0 0 1-11-.8z" fill="#e9e6ea" />
            <circle cx="7" cy="6.800" r="3.200" fill="#c58d74" />
            <path d="M3 6c-.5-4 3-5 5-4.500 3 0 4.500 3 3 5L9.500 5 6 5.300z" fill="#2b2226" />
          </g>
        </svg>
      </button>
      <button aria-label="Explorador de Arquivos" className="ml-px flex w-12 flex-col items-center justify-between pt-[9px]">
        <svg viewBox="0 0 22 20" className="h-5 w-[22px]" aria-hidden="true">
          <path d="M0 1h8l2 2h12v15H0z" fill="#e5a50a" />
          <path d="M0 4h22v14.500H0z" fill="#fbd968" />
          <path d="M4 19v-8.500h14V19h-4v-3.500H8V19z" fill="#3390d6" />
        </svg>
        <span className="h-[2px] w-10 bg-[#76c6f5]" />
      </button>
      <button aria-label="Reprodutor de mídia" className="ml-px flex w-12 flex-col items-center justify-between pt-[9px]">
        <svg viewBox="0 0 20 20" className="h-5 w-5" aria-hidden="true">
          <path d="M4 .5L20 1v17l-3 2H4z" fill="#6aa9cf" />
          <path d="M0 1h17v18H0z" fill="#a8d4ec" />
          <circle cx="8.500" cy="10" r="7" fill="#f0762b" />
          <path d="M6 5.500l7 4.500-7 4.500z" fill="#fff" />
        </svg>
        <span className="h-[2px] w-10 bg-[#76c6f5]" />
      </button>
      <div className="ml-auto flex items-center text-[11px]">
        <svg viewBox="0 0 24 24" className="h-6 w-6" aria-hidden="true">
          <circle cx="12.500" cy="12" r="10" fill="#f9a01e" />
          <path d="M3 9.500a2.800 2.800 0 0 1 0-5.600A4 4 0 0 1 10.500 3a3.300 3.300 0 0 1 1.500 6.500z" fill="#c8dcf5" />
          <path d="M13.500 22a2.800 2.800 0 0 1 .2-5.600 4 4 0 0 1 7.300.2A2.800 2.800 0 0 1 21 22z" fill="#c8dcf5" />
        </svg>
        <span className="ml-2 text-[13px] whitespace-nowrap">32°C</span>
        <span className="ml-[9px] text-[13px] whitespace-nowrap">Parc ensolarado</span>
        <svg viewBox="0 0 12 8" className="ml-[25px] h-2 w-3" fill="none" stroke="currentColor" strokeWidth="1.300" aria-hidden="true">
          <path d="M.5 7L6 1.500 11.500 7" />
        </svg>
        <svg viewBox="0 0 16 12" className="ml-[9px] h-3 w-4" fill="none" stroke="currentColor" aria-hidden="true">
          <path d="M5 3.500h9.500v7h-11V8M14.500 5.500h1v3M2.500 0v3M4.500 0v3M1 2.500h5c0 2-1 2.500-2.500 2.500S1 4.500 1 2.500zM3.500 5v4" />
          <path d="M6.500 5H13v4H5.500V6.500z" fill="currentColor" stroke="none" />
        </svg>
        <svg viewBox="0 0 16 12" className="ml-[7px] h-3 w-4" fill="none" stroke="currentColor" aria-hidden="true">
          <path d="M.5 4h2.500L6.500 1v10L3 8H.5zM8.500 4c1 1.200 1 2.800 0 4" />
          <path d="M10.500 2.500c2 2 2 5 0 7M13 1c2.700 3 2.700 7 0 10" opacity=".6" />
        </svg>
        <svg viewBox="0 0 13 13" className="ml-[11px] h-[13px] w-[13px]" fill="none" stroke="currentColor" aria-hidden="true">
          <path d="M1 12C1 6 6 1 12 1M4 12c0-4.500 3.500-8 8-8M7 12c0-3 2-5 5-5" />
          <circle cx="11.300" cy="11.300" r="1.600" fill="currentColor" stroke="none" />
        </svg>
        <div className="ml-[9px] text-center leading-[17px]">
          <div>POR</div>
          <div>PTB2</div>
        </div>
        <div className="ml-[11px] text-center leading-[17px]">
          <div>14:34</div>
          <div>25/02/2025</div>
        </div>
        <button aria-label="Notificações" className="ml-[18px]">
          <svg viewBox="0 0 16 16" className="h-4 w-4" fill="none" stroke="currentColor" strokeWidth="1.200" aria-hidden="true">
            <path d="M.6 1h14.800v11.500h-5L8 15l-2.500-2.500H.6z" />
          </svg>
        </button>
        <span className="mr-1 ml-5 h-10 w-px bg-[#777]" />
      </div>
    </footer>
  );
}

export default function App() {
  return (
    <div className={`flex h-screen flex-col overflow-hidden bg-white ${SANS}`}>
      <BrowserTabs />
      <BrowserToolbar />
      <div className="flex min-h-0 flex-1 flex-col">
        <ProductBar />
        <ActionBar />
        <div className="flex min-h-0 flex-1">
          <aside className="flex w-[375px] shrink-0 flex-col border-r border-[#ccc]">
            <div className="flex min-h-0 flex-1">
              <NavRail />
              <FieldsPanel />
            </div>
            <QueryMode />
          </aside>
          <Workspace />
        </div>
      </div>
      <Taskbar />
    </div>
  );
}
